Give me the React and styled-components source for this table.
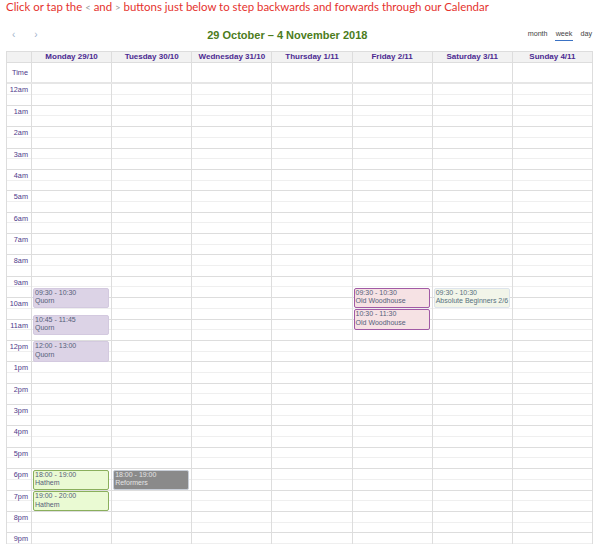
import React from "react";
import styled, { createGlobalStyle } from "styled-components";

const HOUR = 21.38;

const GlobalStyle = createGlobalStyle`
  html, body { margin: 0; padding: 0; background: #fff; }
  body { font-family: "Liberation Sans", Arial, sans-serif; }
  * { box-sizing: border-box; }
`;

const Page = styled.div`
  padding: 0 7px 0 6px;
`;

const Intro = styled.div`
  font-family: "Lato", "Liberation Sans", sans-serif;
  font-size: 11.45px;
  line-height: 13px;
  color: #e5322d;
  white-space: nowrap;
`;

const Angle = styled.span`
  color: #999;
  font-size: 9.5px;
`;

const Toolbar = styled.div`
  display: flex;
  align-items: center;
  height: 20px;
  margin-top: 11px;
  margin-bottom: 6px;
`;

const NavGroup = styled.div`
  display: flex;
  gap: 19px;
  padding-left: 6px;
  width: 42px;
`;

const NavBtn = styled.span`
  color: #9fb3cc;
  font-size: 10px;
  line-height: 10px;
`;

const Title = styled.h2`
  flex: 1;
  margin: 0;
  text-align: center;
  font-size: 11px;
  font-weight: bold;
  color: #4c7c1c;
`;

const ViewGroup = styled.div`
  display: flex;
  gap: 6px;
  padding-right: 0;
  align-items: flex-start;
`;

const ViewBtn = styled.span`
  font-size: 7.2px;
  color: #444;
  padding: 0 1px 2px;
  border-bottom: 1.5px solid ${(p) => (p.$active ? "#3a72c4" : "transparent")};
`;

const Calendar = styled.div`
  border: 1px solid #ddd;
  border-bottom: none;
`;

const Row = styled.div`
  display: grid;
  grid-template-columns: 24px repeat(7, 1fr);
`;

const HeadCell = styled.div`
  background: #f2f2f2;
  height: 10px;
  font-size: 8px;
  line-height: 10px;
  font-weight: bold;
  color: #4b2991;
  text-align: center;
  border-left: ${(p) => (p.$first ? "none" : "1px solid #ddd")};
  white-space: nowrap;
  overflow: hidden;
`;

const AllDayCell = styled.div`
  height: 20px;
  border-top: 1px solid #ddd;
  border-left: ${(p) => (p.$first ? "none" : "1px solid #ddd")};
  font-size: 7.3px;
  color: #4e3a8a;
  text-align: right;
  padding-right: 3px;
  line-height: 20px;
`;

const Divider = styled.div`
  height: 2.4px;
  background: #e6e6e6;
`;

const Column = styled.div`
  position: relative;
  display: flex;
  flex-direction: column;
  border-left: ${(p) => (p.$first ? "none" : "1px solid #ddd")};
`;

const Slot = styled.div`
  height: ${HOUR / 2}px;
  border-bottom: 1px solid ${(p) => (p.$half ? "#ddd" : "#efefef")};
  font-size: 7.3px;
  line-height: 11px;
  color: #4e3a8a;
  text-align: right;
  padding-right: 3px;
  white-space: nowrap;
`;

const palettes = {
  quorn: { bg: "#dcd3e6", border: "#d3c9df", color: "#55607a" },
  wood: { bg: "#f6e2e4", border: "#a15aa5", color: "#55607a" },
  abs: { bg: "#f2f5e9", border: "#dde4ec", color: "#55707e" },
  hath: { bg: "#eafad3", border: "#8aaf5c", color: "#55607a" },
  ref: { bg: "#8a8a8a", border: "#c9cfd8", color: "#e4e4e4" },
};

const Event = styled.div`
  position: absolute;
  left: 1px;
  right: 2px;
  background: ${(p) => palettes[p.$kind].bg};
  border: 1px solid ${(p) => palettes[p.$kind].border};
  border-radius: 2px;
  color: ${(p) => palettes[p.$kind].color};
  font-size: 7px;
  line-height: 8.4px;
  padding: 0 1px;
  overflow: hidden;
  white-space: nowrap;
`;

const days = [
  "Monday 29/10",
  "Tuesday 30/10",
  "Wednesday 31/10",
  "Thursday 1/11",
  "Friday 2/11",
  "Saturday 3/11",
  "Sunday 4/11",
];

const events = [
  { day: 0, start: 9.5, end: 10.5, time: "09:30 - 10:30", name: "Quorn", kind: "quorn" },
  { day: 0, start: 10.75, end: 11.75, time: "10:45 - 11:45", name: "Quorn", kind: "quorn" },
  { day: 0, start: 12, end: 13, time: "12:00 - 13:00", name: "Quorn", kind: "quorn" },
  { day: 0, start: 18, end: 19, time: "18:00 - 19:00", name: "Hathem", kind: "hath" },
  { day: 0, start: 19, end: 20, time: "19:00 - 20:00", name: "Hathem", kind: "hath" },
  { day: 1, start: 18, end: 19, time: "18:00 - 19:00", name: "Reformers", kind: "ref" },
  { day: 4, start: 9.5, end: 10.5, time: "09:30 - 10:30", name: "Old Woodhouse", kind: "wood" },
  { day: 4, start: 10.5, end: 11.5, time: "10:30 - 11:30", name: "Old Woodhouse", kind: "wood" },
  { day: 5, start: 9.5, end: 10.5, time: "09:30 - 10:30", name: "Absolute Beginners 2/6", kind: "abs" },
];

const hourLabel = (h) => {
  if (h === 0) return "12am";
  if (h < 12) return `${h}am`;
  if (h === 12) return "12pm";
  return `${h - 12}pm`;
};

const slots = Array.from({ length: 48 }, (_, i) => i);

export default function App() {
  return (
    <>
      <GlobalStyle />
      <Page>
        <Intro>
          Click or tap the <Angle>&lt;</Angle> and <Angle>&gt;</Angle> buttons just below to step
          backwards and forwards through our Calendar
        </Intro>
        <Toolbar>
          <NavGroup>
            <NavBtn>‹</NavBtn>
            <NavBtn>›</NavBtn>
          </NavGroup>
          <Title>29 October – 4 November 2018</Title>
          <ViewGroup>
            <ViewBtn>month</ViewBtn>
            <ViewBtn $active>week</ViewBtn>
            <ViewBtn>day</ViewBtn>
          </ViewGroup>
        </Toolbar>
        <Calendar>
          <Row>
            <HeadCell $first />
            {days.map((d) => (
              <HeadCell key={d}>{d}</HeadCell>
            ))}
          </Row>
          <Row>
            <AllDayCell $first>Time</AllDayCell>
            {days.map((d) => (
              <AllDayCell key={d} />
            ))}
          </Row>
          <Divider />
          <Row>
            <Column $first>
              {slots.map((i) => (
                <Slot key={i} $half={i % 2 === 1}>
                  {i % 2 === 0 ? hourLabel(i / 2) : ""}
                </Slot>
              ))}
            </Column>
            {days.map((d, di) => (
              <Column key={d}>
                {slots.map((i) => (
                  <Slot key={i} $half={i % 2 === 1} />
                ))}
                {events
                  .filter((e) => e.day === di)
                  .map((e, k) => (
                    <Event
                      key={k}
                      $kind={e.kind}
                      style={{ top: e.start * HOUR + 0.5, height: (e.end - e.start) * HOUR - 1 }}
                    >
                      <div>{e.time}</div>
                      <div>{e.name}</div>
                    </Event>
                  ))}
              </Column>
            ))}
          </Row>
        </Calendar>
      </Page>
    </>
  );
}
